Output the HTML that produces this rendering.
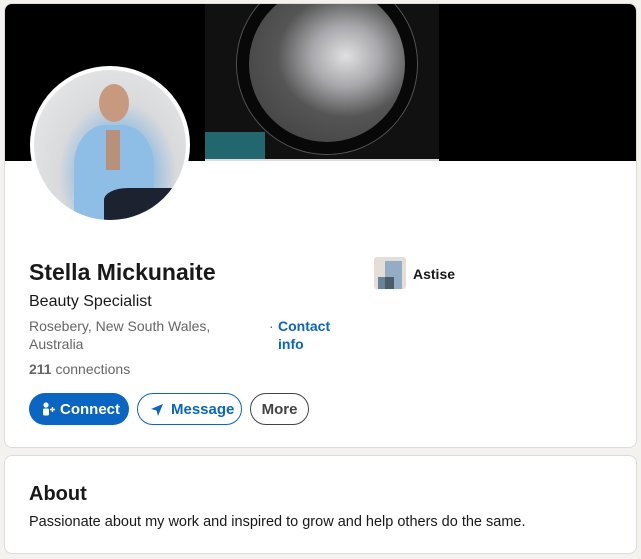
<!DOCTYPE html>
<html><head><meta charset="utf-8"><style>
*{margin:0;padding:0;box-sizing:border-box}
body{width:641px;height:559px;background:#f3f2ef;font-family:"Liberation Sans",sans-serif;position:relative;overflow:hidden;color:#191919}
.card{position:absolute;left:4px;width:633px;background:#fff;border:1px solid #dedcd8;border-radius:8px;overflow:hidden}
.a{position:absolute}
</style></head><body>
<div class="card" style="top:3px;height:445px">
  <div class="a" style="left:0;top:0;width:633px;height:157px;background:#000"></div>
  <div class="a" style="left:200px;top:0;width:234px;height:155px;background:#111"></div>
  <div class="a" style="left:232px;top:-30px;width:180px;height:180px;border-radius:50%;border:12px solid #080808;background:radial-gradient(ellipse at 62% 45%,#e0e0e2 0,#a8a8ac 25%,#555 50%,#3a3a3c 100%);box-shadow:0 0 0 1px #555"></div>
  <div class="a" style="left:200px;top:128px;width:60px;height:27px;background:#2a8a95;opacity:.7"></div>
  <div class="a" style="left:200px;top:155px;width:234px;height:2px;background:#ddd"></div>
  <div class="a" style="left:25px;top:62px;width:160px;height:158px;border-radius:50%;background:#fff"></div>
  <div class="a" style="left:29px;top:66px;width:152px;height:150px;border-radius:50%;overflow:hidden;background:radial-gradient(ellipse at 55% 70%,#7fb0db 0,#8cb8e0 25%,#d9dadc 50%,#ececec 100%)">
    <div class="a" style="left:65px;top:14px;width:30px;height:38px;border-radius:50%;background:#c79a80"></div>
    <div class="a" style="left:40px;top:55px;width:80px;height:100px;border-radius:40% 40% 0 0;background:#8ebde5"></div>
    <div class="a" style="left:72px;top:60px;width:14px;height:40px;background:#b9907a"></div>
    <div class="a" style="left:70px;top:118px;width:80px;height:40px;border-radius:30% 0 0 0;background:#1c2230"></div>
  </div>
  <div class="a" style="left:24px;top:255px;font-size:23px;font-weight:bold">Stella Mickunaite</div>
  <div class="a" style="left:24px;top:289px;font-size:16px">Beauty Specialist</div>
  <div class="a" style="left:24px;top:313px;font-size:14px;line-height:18px;color:#666">Rosebery, New South Wales,<br>Australia</div>
  <div class="a" style="left:264px;top:313px;font-size:14px;line-height:18px;color:#666">·</div>
  <div class="a" style="left:273px;top:313px;font-size:14px;line-height:18px;color:#0a66c2;font-weight:bold">Contact<br>info</div>
  <div class="a" style="left:24px;top:357px;font-size:14px;color:#666"><b>211</b> connections</div>
  <div class="a" style="left:24px;top:389px;width:100px;height:32px;border-radius:16px;background:#0a66c2;color:#fff;font-size:15px;font-weight:bold;line-height:34px;padding-left:31px">Connect
    <svg class="a" style="left:13px;top:9px" width="14" height="14" viewBox="0 0 14 14"><circle cx="4" cy="3" r="2.6" fill="#fff"/><rect x="1" y="6.5" width="6" height="7" rx="1.5" fill="#fff"/><path d="M10.5 5v5M8 7.5h5" stroke="#fff" stroke-width="1.4"/></svg></div>
  <div class="a" style="left:132px;top:389px;width:105px;height:32px;border-radius:16px;border:1px solid #0a66c2;color:#0a66c2;font-size:15px;font-weight:bold;line-height:32px;padding-left:33px">Message
    <svg class="a" style="left:12px;top:9px" width="14" height="14" viewBox="0 0 14 14"><path d="M1 6L13 1 8 13 6.5 7.5Z" fill="#0a66c2"/></svg></div>
  <div class="a" style="left:245px;top:389px;width:59px;height:32px;border-radius:16px;border:1px solid #444;color:#444;font-size:15px;font-weight:bold;line-height:32px;text-align:center">More</div>
  <div class="a" style="left:369px;top:253px;width:32px;height:32px;border-radius:3px;background:#e4ddd8">
    <div class="a" style="left:11px;top:4px;width:17px;height:28px;background:#93aec3"></div>
    <div class="a" style="left:4px;top:20px;width:16px;height:12px;background:#6a8398"></div>
    <div class="a" style="left:11px;top:20px;width:9px;height:12px;background:#4b5c6b"></div>
  </div>
  <div class="a" style="left:408px;top:262px;font-size:14px;font-weight:bold">Astise</div>
</div>
<div class="card" style="top:455px;height:99px">
  <div class="a" style="left:24px;top:27px;font-size:20px;font-weight:bold">About</div>
  <div class="a" style="left:24px;top:58px;font-size:14.5px">Passionate about my work and inspired to grow and help others do the same.</div>
</div>
</body></html>
